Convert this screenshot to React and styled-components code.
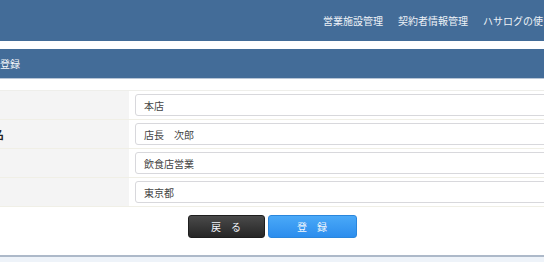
import React from 'react';
import styled, { createGlobalStyle } from 'styled-components';

const GlobalStyle = createGlobalStyle`
	body {
		margin: 0;
		overflow: hidden;
		background: #ffffff;
		font-family: "Noto Sans CJK JP", "Noto Sans", sans-serif;
	}
`

const Page = styled.div`
	width: 664px;
	margin-left: -60px;
`

const Header = styled.header`
	height: 41px;
	background: #436c98;
	display: flex;
	align-items: center;
	padding-left: 383px;
	gap: 15px;
	white-space: nowrap;
`

const NavItem = styled.a`
	color: #eef2f7;
	font-size: 10px;
	text-decoration: none;
`

const SectionBar = styled.div`
	margin-top: 8px;
	height: 29px;
	background: #436c98;
	border-bottom: 1px solid #b7c5d6;
	display: flex;
	align-items: center;
	padding-left: 20px;
	color: #f4f6fa;
	font-size: 10px;
`

const Form = styled.div`
	margin-top: 11px;
	border-top: 1px solid #eeeeea;
`

const Row = styled.div`
	display: grid;
	grid-template-columns: 189px 1fr;
	height: 28px;
	border-bottom: 1px solid #f0efe6;
`

const Label = styled.div`
	background: #f4f4f4;
	display: flex;
	align-items: center;
	padding-left: 9px;
	font-size: 11px;
	font-weight: bold;
	color: #222;
	white-space: nowrap;
`

const Cell = styled.div`
	display: flex;
	align-items: center;
	padding: 0 6px;
`

const Field = styled.div`
	flex: 1;
	height: 22px;
	box-sizing: border-box;
	border: 1px solid #d8d8dc;
	border-radius: 3px;
	display: flex;
	align-items: center;
	padding-left: 8px;
	font-size: 10px;
	color: #444;
`

const Buttons = styled.div`
	display: flex;
	justify-content: center;
	gap: 3px;
	padding: 8px 0 17px;
`

const Button = styled.button`
	width: ${p => p.w}px;
	height: 23px;
	border-radius: 3px;
	font-family: inherit;
	font-size: 10px;
	letter-spacing: 10px;
	text-indent: 10px;
	color: #f2f6fb;
	border: 1px solid ${p => p.primary ? '#2a86dc' : '#1e1e1e'};
	background: ${p => p.primary
		? 'linear-gradient(#4aa9f8, #2c8ded)'
		: 'linear-gradient(#4a4a4a, #262626)'};
	display: flex;
	align-items: center;
	justify-content: center;
`

const Footer = styled.div`
	height: 12px;
	border-top: 2px solid #adb9c9;
	background: #eef3f9;
`

const rows = [
	{ label: '施設名', value: '本店' },
	{ label: '責任者氏名', value: '店長　次郎' },
	{ label: '営業種別', value: '飲食店営業' },
	{ label: '所在地', value: '東京都' },
]

export default function App() {
	return (
		<Page>
			<GlobalStyle />
			<Header>
				<NavItem>営業施設管理</NavItem>
				<NavItem>契約者情報管理</NavItem>
				<NavItem>ハサログの使い方</NavItem>
			</Header>
			<SectionBar>営業施設登録</SectionBar>
			<Form>
				{rows.map(r => (
					<Row key={r.label}>
						<Label>{r.label}</Label>
						<Cell>
							<Field>{r.value}</Field>
						</Cell>
					</Row>
				))}
			</Form>
			<Buttons>
				<Button w={77}>戻る</Button>
				<Button w={89} primary>登録</Button>
			</Buttons>
			<Footer />
		</Page>
	);
}
